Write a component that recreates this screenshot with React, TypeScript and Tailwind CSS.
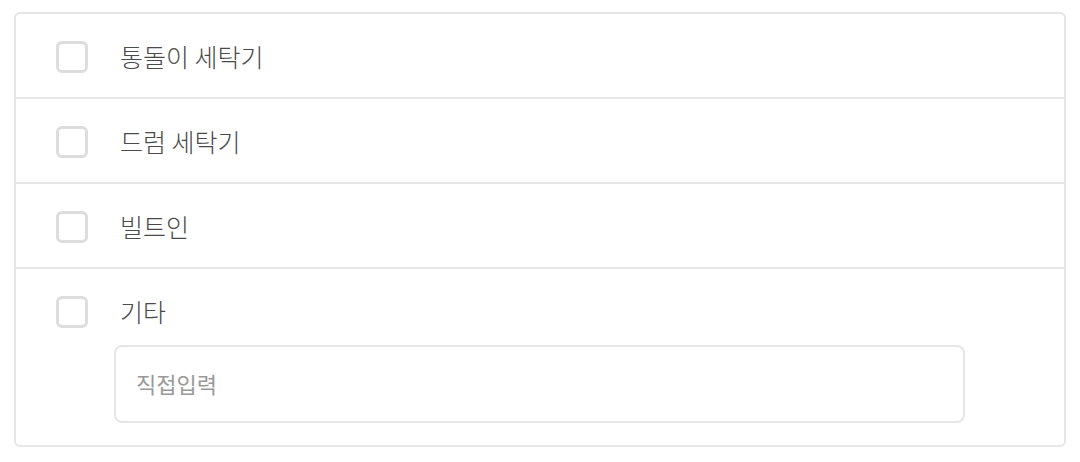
const OPTIONS = ['통돌이 세탁기', '드럼 세탁기', '빌트인']

function Box() {
  return <span className="h-8 w-8 shrink-0 rounded-md border-[3px] border-[#dddddd] bg-white" />
}

export default function App() {
  return (
    <div className="min-h-screen bg-white px-[14px] pt-3" style={{ fontFamily: '"Noto Sans CJK KR", "Noto Sans", sans-serif' }}>
      <div className="overflow-hidden rounded-md border-2 border-[#e6e6e6]">
        {OPTIONS.map((label) => (
          <label key={label} className="flex h-[85px] items-center gap-8 border-b-2 border-[#e6e6e6] pl-10 pt-[2px]">
            <Box />
            <span className="text-[25px] font-light text-[#4a4a4a]">{label}</span>
          </label>
        ))}
        <div className="pb-[22px] pt-6">
          <label className="flex items-center gap-8 pl-10">
            <Box />
            <span className="text-[25px] font-light text-[#4a4a4a]">기타</span>
          </label>
          <div className="ml-[98px] mt-[14px] flex h-[78px] w-[851px] items-center rounded-lg border-2 border-[#e6e6e6] px-5">
            <input placeholder="직접입력" className="w-full bg-transparent text-[22px] text-[#444] outline-none placeholder:text-[#999]" />
          </div>
        </div>
      </div>
    </div>
  )
}
